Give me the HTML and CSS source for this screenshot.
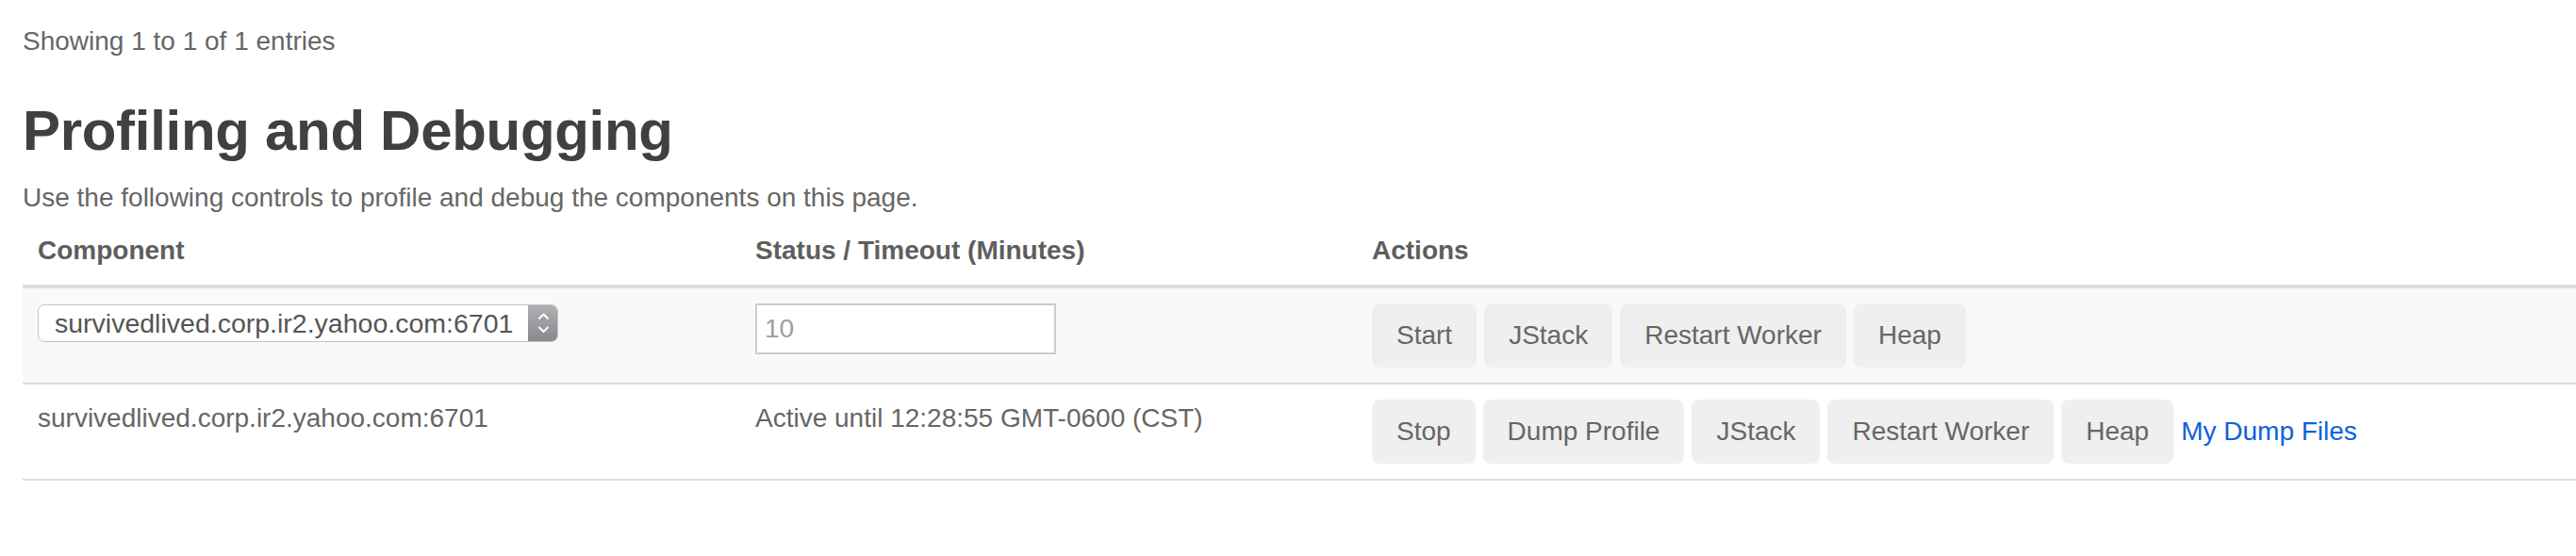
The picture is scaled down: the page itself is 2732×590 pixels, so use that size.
FILE: index.html
```html
<!DOCTYPE html>
<html lang="en">
<head>
<meta charset="utf-8">
<title>Profiling and Debugging</title>
<link rel="stylesheet" href="styles.css">
</head>
<body>
<div class="page">
  <div class="info">Showing 1 to 1 of 1 entries</div>
  <h2 class="title">Profiling and Debugging</h2>
  <p class="lead">Use the following controls to profile and debug the components on this page.</p>
  <table class="prof-table">
    <thead>
      <tr>
        <th class="col-comp">Component</th>
        <th class="col-status">Status / Timeout (Minutes)</th>
        <th class="col-actions">Actions</th>
      </tr>
    </thead>
    <tbody>
      <tr class="striped">
        <td>
          <div class="select">
            <select class="select-native">
              <option>survivedlived.corp.ir2.yahoo.com:6701</option>
            </select>
            <span class="stepper">
              <svg width="31" height="40" viewBox="0 0 31 40">
                <path d="M12 15 L16.5 10.5 L21 15" fill="none" stroke="#fff" stroke-width="2" stroke-linecap="round" stroke-linejoin="round"/>
                <path d="M12 24.5 L16.5 29 L21 24.5" fill="none" stroke="#fff" stroke-width="2" stroke-linecap="round" stroke-linejoin="round"/>
              </svg>
            </span>
          </div>
        </td>
        <td><input class="timeout" type="text" placeholder="10"></td>
        <td>
          <div class="actions">
            <button class="btn">Start</button>
            <button class="btn">JStack</button>
            <button class="btn">Restart Worker</button>
            <button class="btn">Heap</button>
          </div>
        </td>
      </tr>
      <tr>
        <td>survivedlived.corp.ir2.yahoo.com:6701</td>
        <td>Active until 12:28:55 GMT-0600 (CST)</td>
        <td>
          <div class="actions">
            <button class="btn">Stop</button>
            <button class="btn">Dump Profile</button>
            <button class="btn">JStack</button>
            <button class="btn">Restart Worker</button>
            <button class="btn">Heap</button>
            <a class="dump-link" href="#">My Dump Files</a>
          </div>
        </td>
      </tr>
    </tbody>
  </table>
</div>
</body>
</html>
```
FILE: styles.css
```css
html, body {
  margin: 0;
  padding: 0;
  background: #ffffff;
}

body {
  font-family: "Liberation Sans", Arial, Helvetica, sans-serif;
  font-size: 28px;
  line-height: 40px;
  color: #666666;
}

.page {
  padding: 24px 0 0 24px;
}

.info {
  line-height: 40px;
}

.title {
  margin: 42px 0 18px 0;
  font-size: 60px;
  line-height: 66px;
  font-weight: bold;
  color: #404040;
  letter-spacing: -0.3px;
}

.lead {
  margin: 0;
  line-height: 40px;
}

.prof-table {
  width: 100%;
  border-collapse: collapse;
  table-layout: fixed;
  border-bottom: 2px solid #dddddd;
}

.prof-table th {
  text-align: left;
  font-weight: bold;
  color: #5e5e5e;
  padding: 16px;
  border-bottom: 4px solid #dddddd;
  vertical-align: bottom;
}

.col-comp { width: 729px; }
.col-status { width: 622px; }

.prof-table td {
  padding: 16px;
  vertical-align: top;
  border-top: 2px solid #dddddd;
  white-space: nowrap;
}

.prof-table tbody tr:first-child td {
  border-top: none;
}

.striped td {
  background: #f9f9f9;
}

.select {
  display: flex;
  width: 552px;
  height: 40px;
  margin-top: 1px;
  box-sizing: border-box;
  border: 1px solid #c4c4c4;
  border-radius: 7px;
  background: #ffffff;
  overflow: hidden;
}

.select-native {
  flex: 1;
  min-width: 0;
  appearance: none;
  -webkit-appearance: none;
  border: none;
  background: transparent;
  font-family: "Liberation Sans", Arial, Helvetica, sans-serif;
  font-size: 28.5px;
  line-height: 38px;
  height: 38px;
  color: #555555;
  padding: 0 0 0 17px;
  margin: 0;
  outline: none;
}

.stepper {
  display: flex;
  width: 31px;
  flex: none;
  background: linear-gradient(#b0b0b4, #88888c);
}

.stepper svg {
  display: block;
  margin-top: -1px;
}

.timeout {
  display: block;
  width: 319px;
  height: 54px;
  box-sizing: border-box;
  border: 2px solid #cccccc;
  border-radius: 0;
  padding: 0 8px;
  margin: 0;
  font-family: "Liberation Sans", Arial, Helvetica, sans-serif;
  font-size: 28px;
  color: #555555;
  background: #ffffff;
  outline: none;
}

.timeout::placeholder {
  color: #a0a0a0;
}

.actions {
  display: flex;
  align-items: baseline;
  gap: 8px;
}

.btn {
  font-family: "Liberation Sans", Arial, Helvetica, sans-serif;
  font-size: 28px;
  line-height: 40px;
  padding: 12px 24px;
  border: 2px solid #efefef;
  border-radius: 8px;
  background: #efefef;
  color: #666666;
  margin: 0;
  cursor: pointer;
}

.dump-link {
  color: #0b63d8;
  text-decoration: none;
}
```
